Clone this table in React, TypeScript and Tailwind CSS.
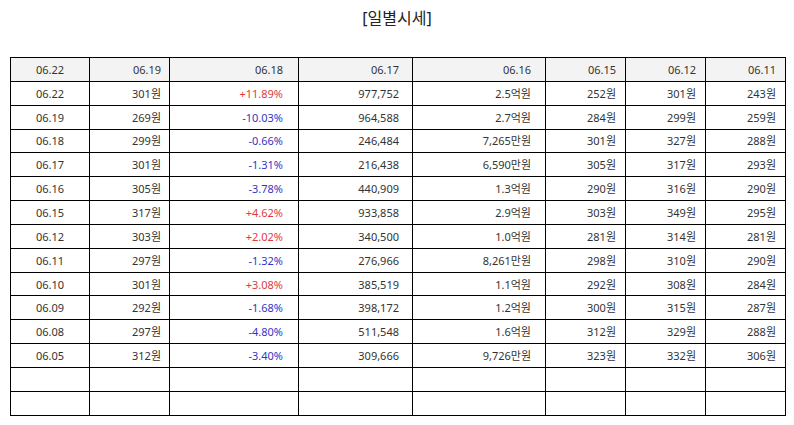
const heads = ['06.22', '06.19', '06.18', '06.17', '06.16', '06.15', '06.12', '06.11']

const rows: string[][] = [
  ['06.22', '301원', '+11.89%', '977,752', '2.5억원', '252원', '301원', '243원'],
  ['06.19', '269원', '-10.03%', '964,588', '2.7억원', '284원', '299원', '259원'],
  ['06.18', '299원', '-0.66%', '246,484', '7,265만원', '301원', '327원', '288원'],
  ['06.17', '301원', '-1.31%', '216,438', '6,590만원', '305원', '317원', '293원'],
  ['06.16', '305원', '-3.78%', '440,909', '1.3억원', '290원', '316원', '290원'],
  ['06.15', '317원', '+4.62%', '933,858', '2.9억원', '303원', '349원', '295원'],
  ['06.12', '303원', '+2.02%', '340,500', '1.0억원', '281원', '314원', '281원'],
  ['06.11', '297원', '-1.32%', '276,966', '8,261만원', '298원', '310원', '290원'],
  ['06.10', '301원', '+3.08%', '385,519', '1.1억원', '292원', '308원', '284원'],
  ['06.09', '292원', '-1.68%', '398,172', '1.2억원', '300원', '315원', '287원'],
  ['06.08', '297원', '-4.80%', '511,548', '1.6억원', '312원', '329원', '288원'],
  ['06.05', '312원', '-3.40%', '309,666', '9,726만원', '323원', '332원', '306원'],
]

// per-column cell classes (width + alignment/padding)
const cols = [
  'w-[79px] text-center',
  'w-[80px] text-right pr-[8px]',
  'w-[129px] text-right pr-[15px]',
  'w-[114px] text-right pr-[13px]',
  'w-[133px] text-right pr-[14px]',
  'w-[80px] text-right pr-[9px]',
  'w-[80px] text-right pr-[9px]',
  'w-[80px] text-right pr-[9px]',
]

const cell = 'border border-black h-[23.85px] p-0 leading-none'

function pctColor(v: string) {
  return v.startsWith('+') ? 'text-[#e23a3a]' : 'text-[#3535c8]'
}

export default function App() {
  return (
    <div className="w-[794px] h-[425px] bg-white text-[#333] font-['Noto_Sans','Noto_Sans_CJK_KR',sans-serif]">
      <h2 className="pt-[6px] text-center text-[16px] leading-[24px] text-[#222]">[일별시세]</h2>
      <table className="mt-[27px] ml-[10px] w-[775px] table-fixed border-collapse text-[11px]">
        <thead>
          <tr className="bg-[#f3f3f3]">
            {heads.map((h, i) => (
              <td key={i} className={`${cell} ${cols[i]}`}>
                {h}
              </td>
            ))}
          </tr>
        </thead>
        <tbody>
          {rows.map((r, ri) => (
            <tr key={ri}>
              {r.map((v, i) => (
                <td key={i} className={`${cell} ${cols[i]} ${i === 2 ? pctColor(v) : ''}`}>
                  {v}
                </td>
              ))}
            </tr>
          ))}
          {[0, 1].map((k) => (
            <tr key={`e${k}`}>
              {cols.map((c, i) => (
                <td key={i} className={`${cell} ${c}`} />
              ))}
            </tr>
          ))}
        </tbody>
      </table>
    </div>
  )
}
